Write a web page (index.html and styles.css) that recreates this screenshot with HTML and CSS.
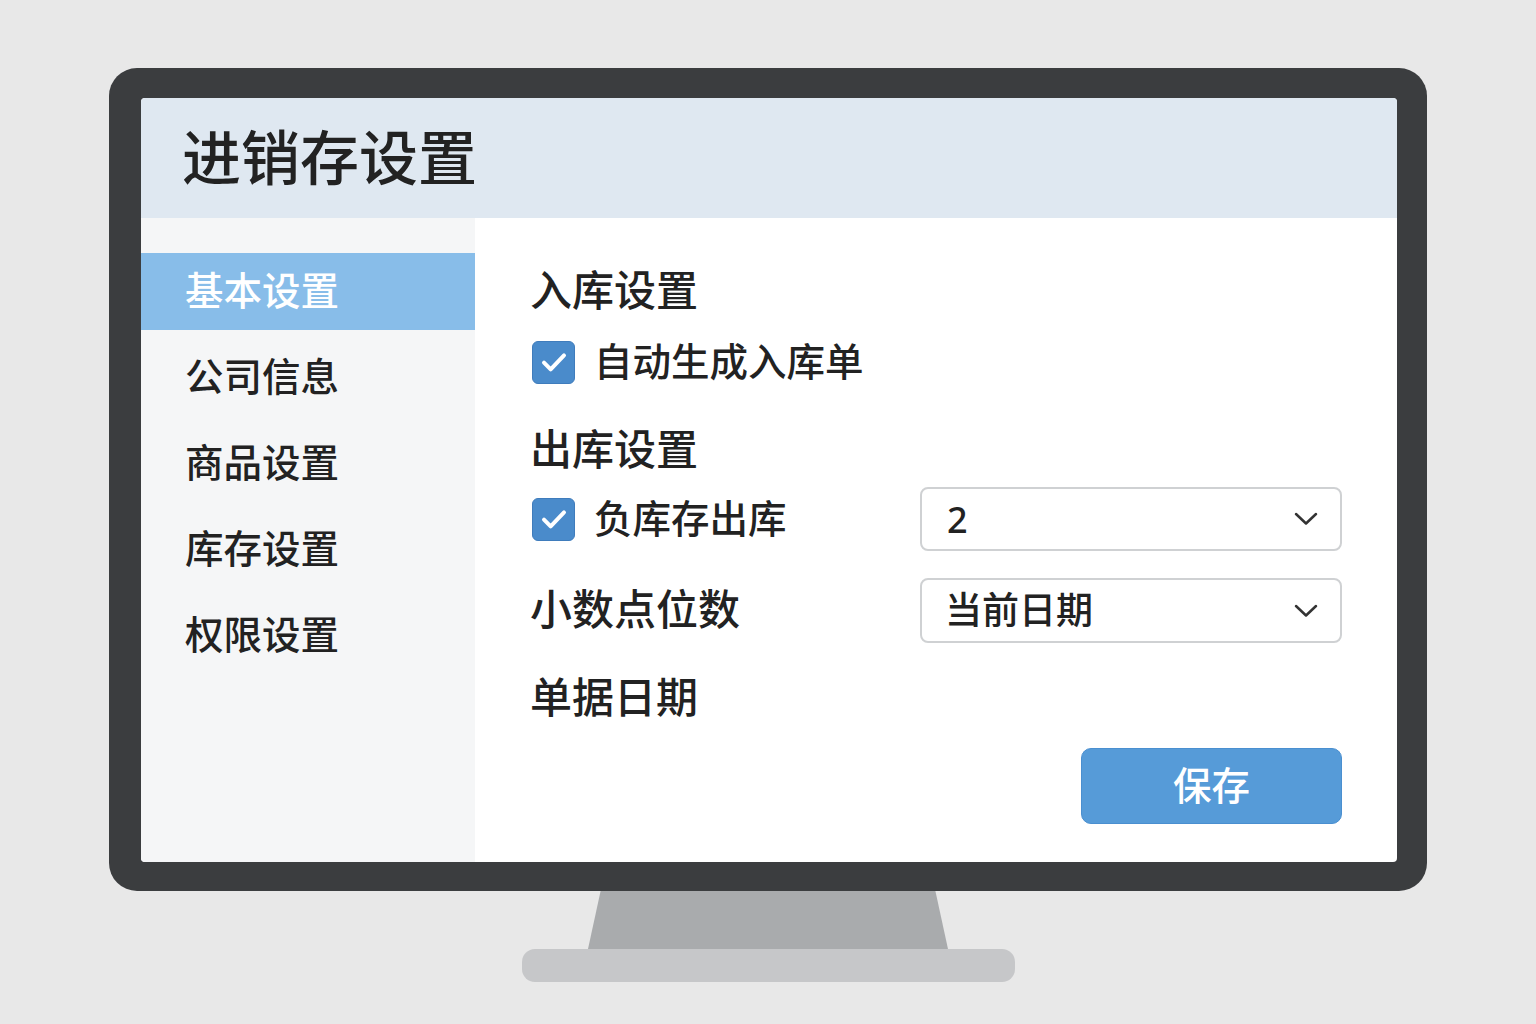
FILE: index.html
```html
<!DOCTYPE html>
<html lang="zh-CN">
<head>
    <meta charset="UTF-8">
    <title>进销存设置</title>
    <link rel="stylesheet" href="styles.css">
</head>
<body>

    <div class="monitor">
        <div class="bezel">
            <div class="screen">

                <div class="header">
                    <h1>进销存设置</h1>
                </div>

                <div class="body">
                    <ul class="sidebar">
                        <li class="active">基本设置</li>
                        <li>公司信息</li>
                        <li>商品设置</li>
                        <li>库存设置</li>
                        <li>权限设置</li>
                    </ul>

                    <div class="main">
                        <h2 class="title first">入库设置</h2>
                        <label class="check-row">
                            <span class="checkbox">
                                <svg viewBox="0 0 24 24" width="32" height="32"><path d="M4.5 12.5l5 5 10-10.5" fill="none" stroke="#fff" stroke-width="3" stroke-linecap="round" stroke-linejoin="round"/></svg>
                            </span>
                            <span class="text">自动生成入库单</span>
                        </label>

                        <h2 class="title second">出库设置</h2>
                        <div class="field-row row-a">
                            <label class="check-row">
                                <span class="checkbox">
                                    <svg viewBox="0 0 24 24" width="32" height="32"><path d="M4.5 12.5l5 5 10-10.5" fill="none" stroke="#fff" stroke-width="3" stroke-linecap="round" stroke-linejoin="round"/></svg>
                                </span>
                                <span class="text">负库存出库</span>
                            </label>
                            <div class="select num">
                                <span>2</span>
                                <svg viewBox="0 0 24 14" width="24" height="14"><path d="M2 2l10 9.5L22 2" fill="none" stroke="#333" stroke-width="2.5" stroke-linecap="round" stroke-linejoin="round"/></svg>
                            </div>
                        </div>

                        <div class="field-row row-b">
                            <span class="field-label">小数点位数</span>
                            <div class="select">
                                <span class="text">当前日期</span>
                                <svg viewBox="0 0 24 14" width="24" height="14"><path d="M2 2l10 9.5L22 2" fill="none" stroke="#333" stroke-width="2.5" stroke-linecap="round" stroke-linejoin="round"/></svg>
                            </div>
                        </div>

                        <h2 class="title third">单据日期</h2>

                        <div class="actions">
                            <button type="button">保存</button>
                        </div>
                    </div>
                </div>

            </div>
        </div>
        <div class="neck"></div>
        <div class="base"></div>
    </div>

</body>
</html>
```

FILE: styles.css
```css
html, body {
    margin: 0;
    padding: 0;
    background-color: #e8e8e8;
    font-family: "Noto Sans CJK SC", "Noto Sans", sans-serif;
    color: #222;
}

.monitor {
    display: flex;
    flex-direction: column;
    align-items: center;
    padding-top: 68px;
}

.bezel {
    width: 1318px;
    box-sizing: border-box;
    padding: 30px 30px 29px 32px;
    background-color: #3b3d3f;
    border-radius: 28px;
}

.screen {
    background-color: #fff;
    border-radius: 4px;
    overflow: hidden;
    height: 764px;
    display: flex;
    flex-direction: column;
}

.header {
    height: 120px;
    box-sizing: border-box;
    background-color: #dfe8f1;
    display: flex;
    align-items: center;
    padding: 0 0 7px 41px;
    flex-shrink: 0;
}

.header h1 {
    margin: 0;
    font-size: 59px;
    font-weight: 500;
    line-height: 1;
    color: #222;
}

.body {
    flex: 1;
    display: flex;
}

/* left menu */
.sidebar {
    width: 334px;
    margin: 0;
    padding: 35px 0 0 0;
    list-style: none;
    background-color: #f5f6f7;
    display: flex;
    flex-direction: column;
    gap: 9px;
}

.sidebar li {
    height: 77px;
    line-height: 71px;
    padding-left: 44px;
    font-size: 38.5px;
    font-weight: 500;
    color: #222;
}

.sidebar li.active {
    background-color: #88bde9;
    color: #fff;
}

/* right panel */
.main {
    flex: 1;
    padding: 44px 55px 0 58px;
    display: flex;
    flex-direction: column;
}

.title {
    margin: 0 0 0 -3px;
    font-size: 42px;
    font-weight: 500;
    color: #222;
}

.title.first {
    height: 58px;
    line-height: 52px;
}

.title.second {
    height: 77px;
    line-height: 74px;
    padding-top: 6px;
}

.title.third {
    margin-top: 25px;
    height: 60px;
    line-height: 54px;
}

.check-row {
    display: flex;
    align-items: center;
    gap: 19px;
    height: 84px;
    font-size: 38.5px;
    font-weight: 500;
    color: #222;
}

.text {
    padding-bottom: 6px;
}

.checkbox {
    width: 43px;
    height: 43px;
    margin-left: -1px;
    box-sizing: border-box;
    border: 1px solid #3f7cbc;
    border-radius: 6px;
    background-color: #4a8bcb;
    display: flex;
    align-items: center;
    justify-content: center;
    flex-shrink: 0;
}

.field-row {
    display: grid;
    grid-template-columns: 387px 1fr;
    align-items: center;
    height: 64px;
}

.field-row .check-row {
    height: 64px;
}

.row-b {
    height: 65px;
    margin-top: 27px;
}

.field-label {
    margin-left: -3px;
    padding-bottom: 8px;
    font-size: 42px;
    font-weight: 500;
    line-height: 50px;
}

.select {
    height: 64px;
    box-sizing: border-box;
    border: 2px solid #cfd1d3;
    border-radius: 8px;
    background-color: #fff;
    display: flex;
    align-items: center;
    justify-content: space-between;
    padding: 0 22px 0 23px;
    font-size: 37px;
    font-weight: 500;
}

.row-b .select {
    height: 65px;
}

.select.num span {
    padding-left: 2px;
    font-family: "Noto Sans", sans-serif;
    font-size: 36px;
    font-weight: 500;
}

.actions {
    display: flex;
    justify-content: flex-end;
    margin-top: 20px;
}

button {
    width: 261px;
    height: 76px;
    padding: 0 0 6px 0;
    border: 1px solid #4a8fd0;
    border-radius: 10px;
    background-color: #569bd8;
    color: #fff;
    font-family: "Noto Sans CJK SC", sans-serif;
    font-size: 38.5px;
    font-weight: 500;
    cursor: pointer;
}

/* stand */
.neck {
    width: 360px;
    height: 58px;
    background-color: #a9abad;
    clip-path: polygon(3.5% 0, 96.5% 0, 100% 100%, 0 100%);
}

.base {
    width: 493px;
    height: 33px;
    background-color: #c6c7c9;
    border-radius: 13px;
}
```
